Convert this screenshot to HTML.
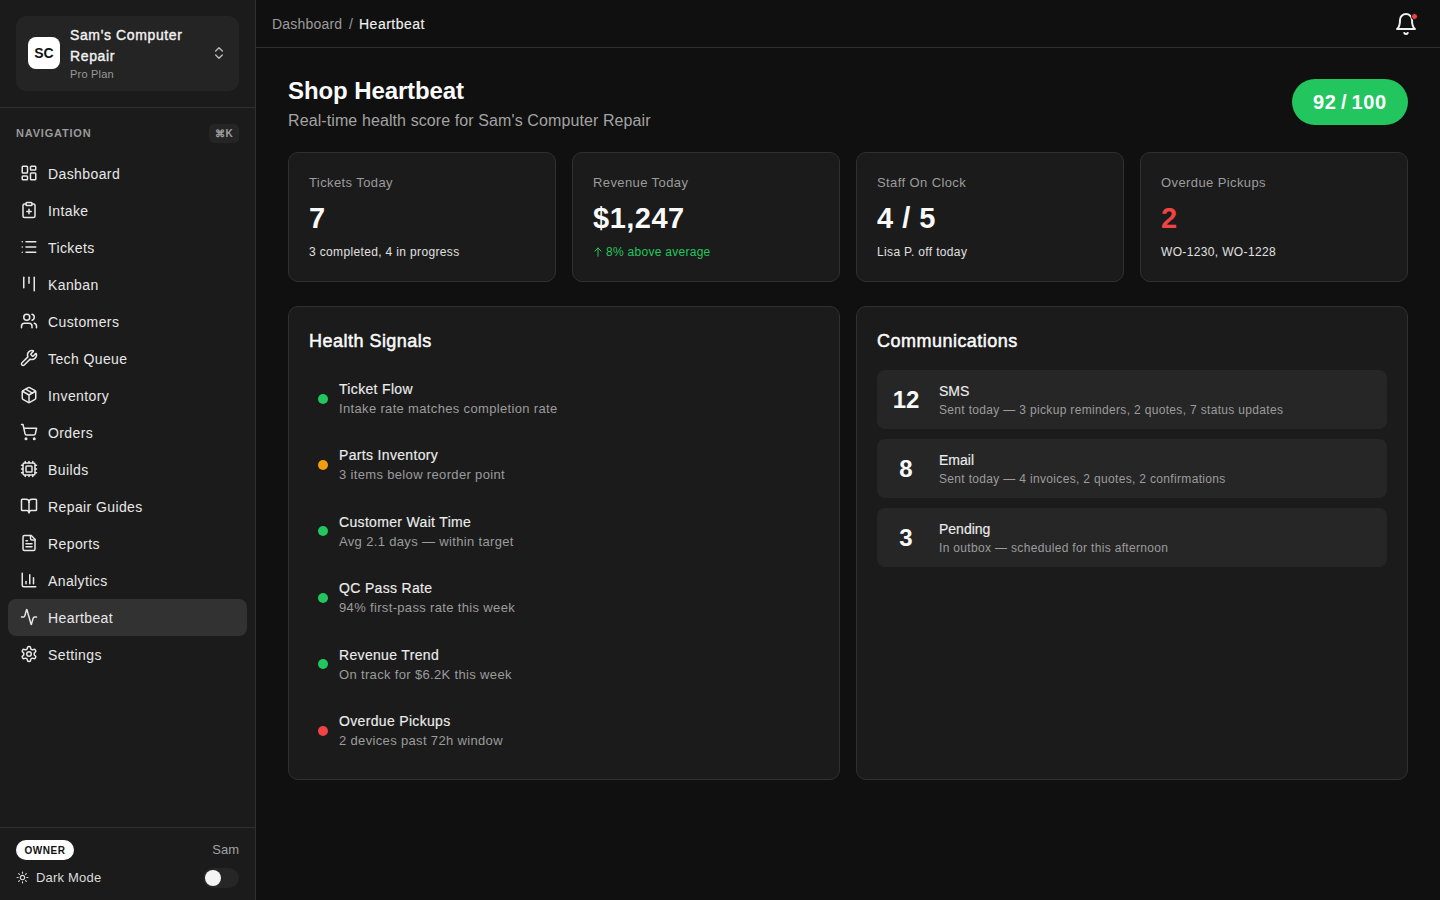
<!DOCTYPE html>
<html><head><meta charset="utf-8">
<style>
*{box-sizing:border-box;margin:0;padding:0}
html,body{width:1440px;height:900px;overflow:hidden;background:#101010;font-family:"Liberation Sans",sans-serif;color:#ededed}
.sig .t,.com .t,#bc b{-webkit-text-stroke:.15px currentColor}
svg{display:block}
.ic{fill:none;stroke:currentColor;stroke-width:2;stroke-linecap:round;stroke-linejoin:round}
#sb{position:absolute;left:0;top:0;width:256px;height:900px;background:#1b1b1b;border-right:1px solid #303030}
#org{position:absolute;left:16px;top:16px;width:223px;height:75px;background:#242424;border-radius:10px}
#av{position:absolute;left:12px;top:21px;width:32px;height:32px;background:#fff;border-radius:8px;color:#111;font-weight:700;font-size:14px;line-height:32px;text-align:center}
.on{position:absolute;left:54px;font-size:14px;font-weight:400;-webkit-text-stroke:.38px #f2f2f2;line-height:18px;color:#f2f2f2;white-space:nowrap;letter-spacing:.62px}
#orgplan{position:absolute;left:54px;top:51px;font-size:11px;color:#9a9a9a;line-height:14px;letter-spacing:.2px}
#chev{position:absolute;left:195px;top:29px;color:#bdbdbd}
#sep1{position:absolute;left:0;top:107px;width:255px;height:1px;background:#303030}
#navlbl{position:absolute;left:16px;top:127px;font-size:11px;font-weight:700;letter-spacing:.8px;color:#9a9a9a;line-height:12px}
#kbd{position:absolute;left:209px;top:124px;width:30px;height:19px;background:#252525;border-radius:5px;font-size:10px;color:#a0a0a0;text-align:center;line-height:19px;font-weight:700}
.nav{position:absolute;left:8px;width:239px;height:37px;border-radius:8px}
.nav.act{background:#323232}
.nav svg{position:absolute;left:12px;top:9px;color:#e8e8e8}
.nav span{position:absolute;left:40px;top:1px;line-height:37px;font-size:14px;color:#e8e8e8;letter-spacing:.4px}
#sep2{position:absolute;left:0;top:827px;width:255px;height:1px;background:#303030}
#owner{position:absolute;left:16px;top:840px;width:58px;height:20px;background:#fff;border-radius:10px;color:#111;font-size:10px;font-weight:700;text-align:center;line-height:21px;letter-spacing:.5px}
#sam{position:absolute;right:16px;top:842px;font-size:13px;color:#a0a0a0;line-height:16px}
#dm{position:absolute;left:16px;top:871px;color:#dcdcdc}
#dmt{position:absolute;left:36px;top:870px;font-size:13px;color:#dcdcdc;line-height:16px;letter-spacing:.2px}
#tog{position:absolute;left:203px;top:868px;width:36px;height:20px;background:#262626;border-radius:10px}
#tog i{position:absolute;left:2px;top:2px;width:16px;height:16px;border-radius:50%;background:#f4f4f4}

#hdr{position:absolute;left:256px;top:0;width:1184px;height:48px;border-bottom:1px solid #303030}
#bc{position:absolute;left:16px;top:15px;font-size:14px;line-height:18px;color:#9c9c9c;letter-spacing:.2px}
#bc span,#bc b{position:absolute;left:0;top:0;white-space:nowrap}
#bc b{left:87px;font-weight:400;color:#f0f0f0;letter-spacing:.5px}
#bell{position:absolute;left:1138px;top:12px;color:#f0f0f0}
#dot{position:absolute;left:1154.5px;top:12.7px;width:7px;height:7px;border-radius:50%;background:#ef4444;border:1.2px solid #101010}

#title{position:absolute;left:288px;top:76px;font-size:24px;font-weight:700;line-height:30px;color:#fafafa;letter-spacing:-.1px}
#sub{position:absolute;left:288px;top:111px;font-size:16px;line-height:20px;color:#a3a3a3;letter-spacing:.1px}
#score{position:absolute;left:1292px;top:79px;width:116px;height:46px;border-radius:23px;background:#22c55e;color:#fff;font-size:20px;font-weight:700;text-align:center;line-height:46px;letter-spacing:.7px;word-spacing:-2px}

.card{position:absolute;background:#1b1b1b;border:1px solid #303030;border-radius:10px}
.stat{top:152px;width:268px;height:130px}
.stat .l{position:absolute;left:20px;top:22px;font-size:13px;line-height:16px;color:#9c9c9c;letter-spacing:.4px}
.stat .v{position:absolute;left:20px;top:48px;font-size:29px;font-weight:700;line-height:34px;color:#fafafa;letter-spacing:.5px}
.stat .s{position:absolute;left:20px;top:91px;font-size:12px;line-height:16px;color:#e0e0e0;letter-spacing:.35px}
.big{top:306px;width:552px;height:474px}
.big h2{position:absolute;left:20px;top:22px;font-size:18px;font-weight:400;-webkit-text-stroke:.5px #fafafa;line-height:24px;color:#fafafa;letter-spacing:.48px}
.sig{position:absolute;left:20px;width:500px;height:50px}
.sig i{position:absolute;left:8.5px;top:14.5px;width:10px;height:10px;border-radius:50%}
.sig .t{position:absolute;left:30px;top:1px;font-size:14px;line-height:18px;color:#ececec;letter-spacing:.33px}
.sig .d{position:absolute;left:30px;top:22px;font-size:13px;line-height:16px;color:#9c9c9c;letter-spacing:.34px}
.com{position:absolute;left:20px;width:510px;height:59px;background:#262626;border-radius:8px}
.com .n{position:absolute;left:0;width:58px;top:0;line-height:59px;text-align:center;font-size:24px;font-weight:700;color:#fafafa}
.com .t{position:absolute;left:62px;top:12px;font-size:14px;line-height:18px;color:#ececec}
.com .d{position:absolute;left:62px;top:33px;font-size:12px;line-height:15px;color:#9c9c9c;letter-spacing:.33px}
</style></head><body>
<div id="sb">
  <div id="org">
    <div id="av">SC</div>
    <div class="on" style="top:10px">Sam's Computer</div><div class="on" style="top:31px">Repair</div>
    <div id="orgplan">Pro Plan</div>
    <svg id="chev" class="ic" width="16" height="16" viewBox="0 0 24 24" style="stroke-width:2"><path d="m7 15 5 5 5-5"/><path d="m7 9 5-5 5 5"/></svg>
  </div>
  <div id="sep1"></div>
  <div id="navlbl">NAVIGATION</div>
  <div id="kbd">⌘K</div>
  <div class="nav" style="top:155px"><svg class="ic" width="18" height="18" viewBox="0 0 24 24"><rect width="7" height="9" x="3" y="3" rx="1"/><rect width="7" height="5" x="14" y="3" rx="1"/><rect width="7" height="9" x="14" y="12" rx="1"/><rect width="7" height="5" x="3" y="16" rx="1"/></svg><span>Dashboard</span></div>
  <div class="nav" style="top:192px"><svg class="ic" width="18" height="18" viewBox="0 0 24 24"><rect width="8" height="4" x="8" y="2" rx="1" ry="1"/><path d="M16 4h2a2 2 0 0 1 2 2v14a2 2 0 0 1-2 2H6a2 2 0 0 1-2-2V6a2 2 0 0 1 2-2h2"/><path d="M9 14h6"/><path d="M12 17v-6"/></svg><span>Intake</span></div>
  <div class="nav" style="top:229px"><svg class="ic" width="18" height="18" viewBox="0 0 24 24"><path d="M3 5h.01"/><path d="M3 12h.01"/><path d="M3 19h.01"/><path d="M8 5h13"/><path d="M8 12h13"/><path d="M8 19h13"/></svg><span>Tickets</span></div>
  <div class="nav" style="top:266px"><svg class="ic" width="18" height="18" viewBox="0 0 24 24"><path d="M5 3v14"/><path d="M12 3v8"/><path d="M19 3v18"/></svg><span>Kanban</span></div>
  <div class="nav" style="top:303px"><svg class="ic" width="18" height="18" viewBox="0 0 24 24"><path d="M16 21v-2a4 4 0 0 0-4-4H6a4 4 0 0 0-4 4v2"/><circle cx="9" cy="7" r="4"/><path d="M22 21v-2a4 4 0 0 0-3-3.87"/><path d="M16 3.13a4 4 0 0 1 0 7.75"/></svg><span>Customers</span></div>
  <div class="nav" style="top:340px"><svg class="ic" width="18" height="18" viewBox="0 0 24 24"><path d="M14.7 6.3a1 1 0 0 0 0 1.4l1.6 1.6a1 1 0 0 0 1.4 0l3.106-3.105c.32-.322.863-.22.983.218a6 6 0 0 1-8.259 7.057l-7.91 7.91a1 1 0 0 1-2.999-3l7.91-7.91a6 6 0 0 1 7.057-8.259c.438.12.54.662.219.984z"/></svg><span>Tech Queue</span></div>
  <div class="nav" style="top:377px"><svg class="ic" width="18" height="18" viewBox="0 0 24 24"><path d="m7.5 4.27 9 5.15"/><path d="M21 8a2 2 0 0 0-1-1.73l-7-4a2 2 0 0 0-2 0l-7 4A2 2 0 0 0 3 8v8a2 2 0 0 0 1 1.73l7 4a2 2 0 0 0 2 0l7-4A2 2 0 0 0 21 16Z"/><path d="m3.3 7 8.7 5 8.7-5"/><path d="M12 22V12"/></svg><span>Inventory</span></div>
  <div class="nav" style="top:414px"><svg class="ic" width="18" height="18" viewBox="0 0 24 24"><circle cx="8" cy="21" r="1"/><circle cx="19" cy="21" r="1"/><path d="M2.05 2.05h2l2.66 12.42a2 2 0 0 0 2 1.58h9.78a2 2 0 0 0 1.95-1.57l1.65-7.43H5.12"/></svg><span>Orders</span></div>
  <div class="nav" style="top:451px"><svg class="ic" width="18" height="18" viewBox="0 0 24 24"><path d="M12 20v2"/><path d="M12 2v2"/><path d="M17 20v2"/><path d="M17 2v2"/><path d="M2 12h2"/><path d="M2 17h2"/><path d="M2 7h2"/><path d="M20 12h2"/><path d="M20 17h2"/><path d="M20 7h2"/><path d="M7 20v2"/><path d="M7 2v2"/><rect x="4" y="4" width="16" height="16" rx="2"/><rect x="8" y="8" width="8" height="8" rx="1"/></svg><span>Builds</span></div>
  <div class="nav" style="top:488px"><svg class="ic" width="18" height="18" viewBox="0 0 24 24"><path d="M12 7v14"/><path d="M3 18a1 1 0 0 1-1-1V4a1 1 0 0 1 1-1h5a4 4 0 0 1 4 4 4 4 0 0 1 4-4h5a1 1 0 0 1 1 1v13a1 1 0 0 1-1 1h-6a3 3 0 0 0-3 3 3 3 0 0 0-3-3z"/></svg><span>Repair Guides</span></div>
  <div class="nav" style="top:525px"><svg class="ic" width="18" height="18" viewBox="0 0 24 24"><path d="M15 2H6a2 2 0 0 0-2 2v16a2 2 0 0 0 2 2h12a2 2 0 0 0 2-2V7Z"/><path d="M14 2v4a2 2 0 0 0 2 2h4"/><path d="M10 9H8"/><path d="M16 13H8"/><path d="M16 17H8"/></svg><span>Reports</span></div>
  <div class="nav" style="top:562px"><svg class="ic" width="18" height="18" viewBox="0 0 24 24"><path d="M3 3v16a2 2 0 0 0 2 2h16"/><path d="M18 17V9"/><path d="M13 17V5"/><path d="M8 17v-3"/></svg><span>Analytics</span></div>
  <div class="nav act" style="top:599px"><svg class="ic" width="18" height="18" viewBox="0 0 24 24"><path d="M22 12h-2.48a2 2 0 0 0-1.93 1.46l-2.35 8.36a.25.25 0 0 1-.48 0L9.24 2.18a.25.25 0 0 0-.48 0l-2.35 8.36A2 2 0 0 1 4.49 12H2"/></svg><span>Heartbeat</span></div>
  <div class="nav" style="top:636px"><svg class="ic" width="18" height="18" viewBox="0 0 24 24"><path d="M12.22 2h-.44a2 2 0 0 0-2 2v.18a2 2 0 0 1-1 1.73l-.43.25a2 2 0 0 1-2 0l-.15-.08a2 2 0 0 0-2.73.73l-.22.38a2 2 0 0 0 .73 2.730l.15.1a2 2 0 0 1 1 1.72v.51a2 2 0 0 1-1 1.74l-.15.09a2 2 0 0 0-.73 2.73l.22.38a2 2 0 0 0 2.73.73l.15-.08a2 2 0 0 1 2 0l.43.25a2 2 0 0 1 1 1.73V20a2 2 0 0 0 2 2h.44a2 2 0 0 0 2-2v-.18a2 2 0 0 1 1-1.73l.43-.25a2 2 0 0 1 2 0l.15.08a2 2 0 0 0 2.73-.73l.22-.39a2 2 0 0 0-.73-2.73l-.15-.08a2 2 0 0 1-1-1.74v-.5a2 2 0 0 1 1-1.74l.15-.09a2 2 0 0 0 .73-2.73l-.22-.38a2 2 0 0 0-2.73-.73l-.15.08a2 2 0 0 1-2 0l-.43-.25a2 2 0 0 1-1-1.73V4a2 2 0 0 0-2-2z"/><circle cx="12" cy="12" r="3"/></svg><span>Settings</span></div>
  <div id="sep2"></div>
  <div id="owner">OWNER</div>
  <div id="sam">Sam</div>
  <svg id="dm" class="ic" width="13" height="13" viewBox="0 0 24 24"><circle cx="12" cy="12" r="4"/><path d="M12 2v2"/><path d="M12 20v2"/><path d="m4.93 4.93 1.41 1.41"/><path d="m17.66 17.66 1.41 1.41"/><path d="M2 12h2"/><path d="M20 12h2"/><path d="m6.34 17.66-1.41 1.41"/><path d="m19.07 4.93-1.41 1.41"/></svg>
  <div id="dmt">Dark Mode</div>
  <div id="tog"><i></i></div>
</div>

<div id="hdr">
  <div id="bc"><span>Dashboard</span><span style="left:77px">/</span><b>Heartbeat</b></div>
  <svg id="bell" class="ic" width="24" height="24" viewBox="0 0 24 24"><path d="M6 8a6 6 0 0 1 12 0c0 7 3 9 3 9H3s3-2 3-9"/><path d="M10.3 21a1.94 1.94 0 0 0 3.4 0"/></svg>
  <div id="dot"></div>
</div>

<div id="title">Shop Heartbeat</div>
<div id="sub">Real-time health score for Sam's Computer Repair</div>
<div id="score">92 / 100</div>

<div class="card stat" style="left:288px"><div class="l">Tickets Today</div><div class="v">7</div><div class="s">3 completed, 4 in progress</div></div>
<div class="card stat" style="left:572px"><div class="l">Revenue Today</div><div class="v">$1,247</div><svg style="position:absolute;left:20.5px;top:93.5px" width="8" height="10" viewBox="0 0 8 10" fill="none" stroke="#22c55e" stroke-width="1" stroke-linecap="round" stroke-linejoin="round"><path d="M4 9.3V1M.9 4.1 4 1l3.1 3.1"/></svg><div class="s" style="color:#22c55e;left:33px;letter-spacing:.28px">8% above average</div></div>
<div class="card stat" style="left:856px"><div class="l">Staff On Clock</div><div class="v">4 / 5</div><div class="s">Lisa P. off today</div></div>
<div class="card stat" style="left:1140px"><div class="l">Overdue Pickups</div><div class="v" style="color:#ef4444">2</div><div class="s">WO-1230, WO-1228</div></div>

<div class="card big" style="left:288px">
  <h2>Health Signals</h2>
  <div class="sig" style="top:72.0px"><i style="background:#22c55e"></i><div class="t">Ticket Flow</div><div class="d">Intake rate matches completion rate</div></div>
  <div class="sig" style="top:138.4px"><i style="background:#f59e0b"></i><div class="t">Parts Inventory</div><div class="d">3 items below reorder point</div></div>
  <div class="sig" style="top:204.8px"><i style="background:#22c55e"></i><div class="t">Customer Wait Time</div><div class="d">Avg 2.1 days — within target</div></div>
  <div class="sig" style="top:271.2px"><i style="background:#22c55e"></i><div class="t">QC Pass Rate</div><div class="d">94% first-pass rate this week</div></div>
  <div class="sig" style="top:337.6px"><i style="background:#22c55e"></i><div class="t">Revenue Trend</div><div class="d">On track for $6.2K this week</div></div>
  <div class="sig" style="top:404.0px"><i style="background:#ef4444"></i><div class="t">Overdue Pickups</div><div class="d">2 devices past 72h window</div></div>
</div>
<div class="card big" style="left:856px">
  <h2>Communications</h2>
  <div class="com" style="top:63px"><div class="n">12</div><div class="t">SMS</div><div class="d">Sent today — 3 pickup reminders, 2 quotes, 7 status updates</div></div>
  <div class="com" style="top:132px"><div class="n">8</div><div class="t">Email</div><div class="d">Sent today — 4 invoices, 2 quotes, 2 confirmations</div></div>
  <div class="com" style="top:201px"><div class="n">3</div><div class="t">Pending</div><div class="d">In outbox — scheduled for this afternoon</div></div>
</div>
</body></html>
